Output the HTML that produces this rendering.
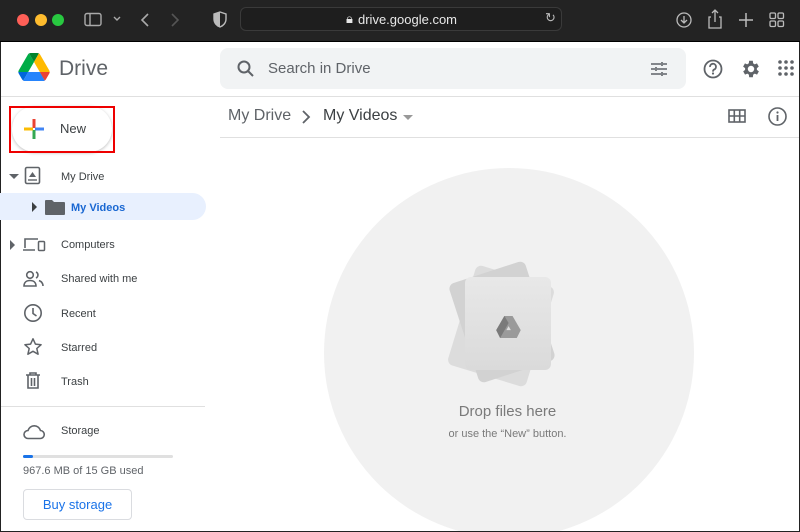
<!DOCTYPE html>
<html><head><style>
*{margin:0;padding:0;box-sizing:border-box}
body{width:800px;height:532px;overflow:hidden;background:#fff;font-family:"Liberation Sans",Arial,sans-serif;position:relative;color:#3c4043}
.a{position:absolute}
.chrome{left:0;top:0;width:800px;height:42px;background:#232323;border-bottom:1px solid #000}
.dot{width:12px;height:12px;border-radius:50%;top:14px}
.frame{left:0;top:42px;width:800px;height:490px;border-left:1px solid #222;border-right:1px solid #222;border-bottom:1px solid #222}
.nav{font-size:11px;color:#3c4043}
svg{position:absolute}
</style></head><body>
<div class="a chrome">
 <div class="a dot" style="left:17px;background:#fe5f57"></div>
 <div class="a dot" style="left:35px;background:#febc2e"></div>
 <div class="a dot" style="left:52px;background:#28c840"></div>
 <svg style="left:84px;top:12px" width="18" height="16"><rect x="1" y="1.5" width="16" height="12" rx="2" fill="none" stroke="#aaa" stroke-width="1.4"/><line x1="6" y1="2" x2="6" y2="13" stroke="#aaa" stroke-width="1.4"/></svg>
 <svg style="left:112px;top:15px" width="10" height="8"><path d="M2 2l3 3 3-3" stroke="#aaa" fill="none" stroke-width="1.4"/></svg>
 <svg style="left:139px;top:12px" width="12" height="16"><path d="M9 2L3 8l6 6" stroke="#aaa" fill="none" stroke-width="1.6"/></svg>
 <svg style="left:169px;top:12px" width="12" height="16"><path d="M3 2l6 6-6 6" stroke="#555" fill="none" stroke-width="1.6"/></svg>
 <svg style="left:213px;top:11px" width="14" height="18"><path d="M7 1l6 2v5c0 4-3 7-6 8-3-1-6-4-6-8V3z" fill="none" stroke="#bbb" stroke-width="1.4"/><path d="M7 1v15c-3-1-6-4-6-8V3z" fill="#bbb"/></svg>
 <div class="a" style="left:240px;top:7px;width:322px;height:24px;border:1px solid #3a3a3a;border-radius:6px;background:#1e1e1e"></div>
 <div class="a" style="left:346px;top:11px;color:#e6e6e6;font-size:13px">🔒︎</div>
 <div class="a" style="left:358px;top:12px;color:#e8e8e8;font-size:13px">drive.google.com</div>
 <div class="a" style="left:545px;top:10px;color:#bbb;font-size:13px">↻</div>
 <svg style="left:675px;top:11px" width="18" height="18"><circle cx="9" cy="9" r="7" fill="none" stroke="#bbb" stroke-width="1.3"/><path d="M9 5v7M6 9l3 3 3-3" fill="none" stroke="#bbb" stroke-width="1.3"/></svg>
 <svg style="left:707px;top:8px" width="16" height="22"><path d="M4 9H2v11h12V9h-2M8 14V2M5 5l3-3 3 3" fill="none" stroke="#bbb" stroke-width="1.3"/></svg>
 <svg style="left:738px;top:12px" width="16" height="16"><path d="M8 1v14M1 8h14" stroke="#bbb" stroke-width="1.5"/></svg>
 <svg style="left:769px;top:12px" width="16" height="16"><g fill="none" stroke="#bbb" stroke-width="1.3"><rect x="1" y="1" width="5.5" height="5.5" rx="1.2"/><rect x="9" y="1" width="5.5" height="5.5" rx="1.2"/><rect x="1" y="9" width="5.5" height="5.5" rx="1.2"/><rect x="9" y="9" width="5.5" height="5.5" rx="1.2"/></g></svg>
</div>
<div class="a frame"></div>
<svg style="left:18px;top:53px" width="32" height="28" viewBox="0 0 87.3 78"><path d="m6.6 66.85 3.850 6.65c.8 1.4 1.95 2.5 3.3 3.3l13.75-23.8h-27.5c0 1.55.4 3.1 1.2 4.5z" fill="#0066da"/><path d="m43.65 25-13.75-23.8c-1.35.8-2.5 1.9-3.3 3.3l-25.4 44a9.06 9.06 0 0 0 -1.2 4.5h27.5z" fill="#00ac47"/><path d="m73.55 76.8c1.35-.8 2.5-1.9 3.3-3.3l1.6-2.75 7.65-13.25c.8-1.4 1.2-2.95 1.2-4.5h-27.502l5.852 11.5z" fill="#ea4335"/><path d="m43.65 25 13.75-23.8c-1.35-.8-2.9-1.2-4.5-1.2h-18.5c-1.6 0-3.15.45-4.5 1.2z" fill="#00832d"/><path d="m59.8 53h-32.3l-13.75 23.8c1.35.8 2.9 1.2 4.5 1.2h50.8c1.6 0 3.15-.45 4.5-1.2z" fill="#2684fc"/><path d="m73.4 26.5-12.7-22c-.8-1.4-1.950-2.5-3.3-3.3l-13.75 23.8 16.15 28h27.45c0-1.55-.4-3.1-1.2-4.5z" fill="#ffba00"/></svg>
<div class="a" style="left:59px;top:57px;font-size:21px;color:#5f6368">Drive</div>
<div class="a" style="left:220px;top:48px;width:466px;height:41px;background:#f1f3f4;border-radius:8px"></div>
<svg style="left:236px;top:59px" width="20" height="20"><circle cx="8" cy="8" r="5.5" fill="none" stroke="#5f6368" stroke-width="2"/><path d="M12 12l5 5" stroke="#5f6368" stroke-width="2"/></svg>
<div class="a" style="left:268px;top:60px;font-size:15px;color:#5f6368">Search in Drive</div>
<svg style="left:650px;top:61px" width="18" height="16"><path d="M1 3h10M13 3h4M1 8h4M7 8h10M1 13h10M13 13h4M12 1v4M6 6v4M12 11v4" stroke="#5f6368" stroke-width="1.6"/></svg>
<svg style="left:702px;top:58px" width="22" height="22"><circle cx="11" cy="11" r="8.5" fill="none" stroke="#5f6368" stroke-width="1.8"/><path d="M8 9a3 3 0 1 1 4 2.6c-1 .5-1 1-1 2" fill="none" stroke="#5f6368" stroke-width="1.8"/><circle cx="11" cy="15.5" r="1.1" fill="#5f6368"/></svg>
<svg style="left:740px;top:58px" width="22" height="22" viewBox="0 0 24 24"><path fill="#5f6368" d="M19.4 13a7.5 7.5 0 0 0 0-2l2.1-1.6-2-3.5-2.5 1a7 7 0 0 0-1.7-1L15 3h-4l-.4 2.9a7 7 0 0 0-1.7 1l-2.5-1-2 3.5L6.6 11a7.5 7.5 0 0 0 0 2l-2.1 1.6 2 3.5 2.5-1a7 7 0 0 0 1.7 1L11 21h4l.4-2.9a7 7 0 0 0 1.7-1l2.5 1 2-3.5zM13 15.5a3.5 3.5 0 1 1 0-7 3.5 3.5 0 0 1 0 7z" transform="translate(-1 0)"/></svg>
<svg style="left:778px;top:60px" width="16" height="16"><g fill="#5f6368"><circle cx="2" cy="2" r="1.8"/><circle cx="8" cy="2" r="1.8"/><circle cx="14" cy="2" r="1.8"/><circle cx="2" cy="8" r="1.8"/><circle cx="8" cy="8" r="1.8"/><circle cx="14" cy="8" r="1.8"/><circle cx="2" cy="14" r="1.8"/><circle cx="8" cy="14" r="1.8"/><circle cx="14" cy="14" r="1.8"/></g></svg>
<div class="a" style="left:1px;top:96px;width:798px;height:1px;background:#e0e0e0"></div>
<div class="a" style="left:12px;top:106px;width:100px;height:46px;border-radius:24px;box-shadow:0 1px 3px rgba(0,0,0,.25);background:#fff"></div>
<div class="a" style="left:9px;top:106px;width:106px;height:47px;border:2px solid #e00"></div>
<svg style="left:23px;top:118px" width="22" height="22"><path d="M11 1v9" stroke="#ea4335" stroke-width="3"/><path d="M12 11h9" stroke="#4285f4" stroke-width="3"/><path d="M11 12v9" stroke="#34a853" stroke-width="3"/><path d="M1 11h9" stroke="#fbbc04" stroke-width="3"/></svg>
<div class="a" style="left:60px;top:121px;font-size:13px;color:#3c4043">New</div>

<svg style="left:9px;top:173px" width="10" height="8"><path d="M0 1h10L5 6z" fill="#5f6368"/></svg>
<svg style="left:24px;top:166px" width="18" height="20"><rect x="1.5" y="1.5" width="14" height="16" rx="1.5" fill="none" stroke="#5f6368" stroke-width="1.6"/><path d="M5 11l3.5-5 3.5 5z" fill="#5f6368"/><path d="M4 14h9" stroke="#5f6368" stroke-width="1.4"/></svg>
<div class="a nav" style="left:61px;top:171px">My Drive</div>
<div class="a" style="left:0;top:193px;width:206px;height:27px;background:#e8f0fe;border-radius:0 14px 14px 0"></div>
<svg style="left:32px;top:202px" width="6" height="10"><path d="M0 0l5 5-5 5z" fill="#3c4043"/></svg>
<svg style="left:45px;top:199px" width="20" height="16"><path d="M0 2a1 1 0 0 1 1-1h6l2 2h10a1 1 0 0 1 1 1v11a1 1 0 0 1-1 1H1a1 1 0 0 1-1-1z" fill="#5f6368"/></svg>
<div class="a" style="left:71px;top:202px;font-size:11px;color:#1967d2;font-weight:bold">My Videos</div>
<svg style="left:10px;top:240px" width="6" height="10"><path d="M0 0l5 5-5 5z" fill="#5f6368"/></svg>
<svg style="left:22px;top:236px" width="24" height="18"><path d="M3 12V3h13M1 14h12" stroke="#5f6368" stroke-width="1.6" fill="none"/><rect x="16.5" y="5.5" width="6" height="9" rx="1" fill="none" stroke="#5f6368" stroke-width="1.5"/></svg>
<div class="a nav" style="left:61px;top:239px">Computers</div>
<svg style="left:23px;top:270px" width="22" height="18"><circle cx="7" cy="5" r="3.3" fill="none" stroke="#5f6368" stroke-width="1.6"/><path d="M1 16c0-4 3-5.5 6-5.5s6 1.5 6 5.5z" fill="none" stroke="#5f6368" stroke-width="1.6"/><path d="M13 2a3.3 3.3 0 0 1 0 6M16 10.5c2 .8 4 2 4 5.5" fill="none" stroke="#5f6368" stroke-width="1.6"/></svg>
<div class="a nav" style="left:61px;top:273px">Shared with me</div>
<svg style="left:23px;top:303px" width="20" height="20"><circle cx="10" cy="10" r="8.2" fill="none" stroke="#5f6368" stroke-width="1.6"/><path d="M10 5v5.5l3.5 2.5" fill="none" stroke="#5f6368" stroke-width="1.6"/></svg>
<div class="a nav" style="left:61px;top:308px">Recent</div>
<svg style="left:23px;top:337px" width="20" height="20"><path d="M10 1.8l2.4 5.3 5.7.6-4.3 3.8 1.3 5.7L10 14.3l-5.1 2.9 1.3-5.7L1.9 7.7l5.7-.6z" fill="none" stroke="#5f6368" stroke-width="1.5" stroke-linejoin="round"/></svg>
<div class="a nav" style="left:61px;top:342px">Starred</div>
<svg style="left:25px;top:372px" width="16" height="18"><path d="M1 3h14M5 3V1h6v2M3 3v13h10V3M6.5 6v8M9.5 6v8" fill="none" stroke="#5f6368" stroke-width="1.6"/></svg>
<div class="a nav" style="left:61px;top:376px">Trash</div>
<div class="a" style="left:1px;top:406px;width:204px;height:1px;background:#e0e0e0"></div>
<svg style="left:22px;top:424px" width="24" height="16"><path d="M6 14.5h12a4 4 0 0 0 .5-8A6.5 6.5 0 0 0 6 6.5a4 4 0 0 0 0 8z" fill="none" stroke="#5f6368" stroke-width="1.6"/></svg>
<div class="a nav" style="left:61px;top:425px">Storage</div>
<div class="a" style="left:23px;top:455px;width:150px;height:3px;background:#e0e0e0;border-radius:2px"></div>
<div class="a" style="left:23px;top:455px;width:10px;height:3px;background:#1a73e8;border-radius:2px"></div>
<div class="a" style="left:23px;top:465px;font-size:11px;color:#5f6368">967.6 MB of 15 GB used</div>
<div class="a" style="left:23px;top:489px;width:109px;height:31px;border:1px solid #dadce0;border-radius:4px;color:#1a73e8;font-size:13px;text-align:center;line-height:29px">Buy storage</div>
<div class="a" style="left:228px;top:107px;font-size:16px;color:#5f6368">My Drive</div>
<svg style="left:301px;top:110px" width="10" height="14"><path d="M2 1l6 6-6 6" stroke="#5f6368" stroke-width="1.8" fill="none"/></svg>
<div class="a" style="left:323px;top:107px;font-size:16px;color:#3c4043">My Videos</div>
<svg style="left:403px;top:115px" width="10" height="6"><path d="M0 0h10L5 5z" fill="#999"/></svg>
<svg style="left:728px;top:109px" width="18" height="14"><rect x="1" y="1" width="16" height="12" fill="none" stroke="#5f6368" stroke-width="1.6"/><path d="M1 7h16M6.3 1v12M11.7 1v12" stroke="#5f6368" stroke-width="1.6"/></svg>
<svg style="left:767px;top:106px" width="21" height="21"><circle cx="10.5" cy="10.5" r="8.5" fill="none" stroke="#5f6368" stroke-width="1.6"/><path d="M10.5 9v6" stroke="#5f6368" stroke-width="1.8"/><circle cx="10.5" cy="6.5" r="1.1" fill="#5f6368"/></svg>
<div class="a" style="left:220px;top:137px;width:579px;height:1px;background:#e0e0e0"></div>
<div class="a" style="left:220px;top:138px;width:579px;height:393px;overflow:hidden">
 <div class="a" style="left:104px;top:30px;width:370px;height:370px;border-radius:50%;background:#f1f1f1"></div>
 <div class="a" style="left:240px;top:136px;width:82px;height:104px;background:#dcdcdc;border-radius:6px;transform:rotate(17deg)"></div>
 <div class="a" style="left:242px;top:132px;width:80px;height:104px;background:#d2d2d2;border-radius:6px;transform:rotate(-18deg)"></div>
 <div class="a" style="left:245px;top:139px;width:86px;height:93px;background:linear-gradient(#e8e8e8,#dadada);border-radius:6px"></div>
 <svg style="left:276px;top:178px" width="25" height="22" viewBox="0 0 87.3 78"><path d="M29 0h29l29 50-14 28H14L0 50z" fill="#9a9a9a"/><path d="M36 50h16l-8-14z" fill="#dedede"/><path d="M29 0l15 25L14 78 0 50z" fill="#7a7a7a"/></svg>
 <div class="a" style="left:-2px;width:579px;top:265px;text-align:center;font-size:15px;color:#7a7a7a">Drop files here</div>
 <div class="a" style="left:-2px;width:579px;top:290px;text-align:center;font-size:11px;color:#7a7a7a">or use the “New” button.</div>
</div>
</body></html>
